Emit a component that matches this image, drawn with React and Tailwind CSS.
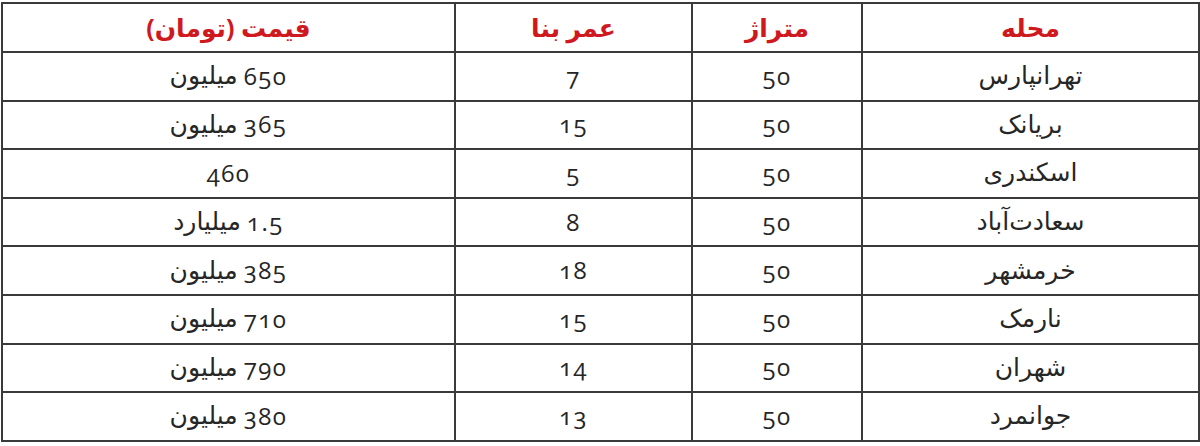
import React from "react";

const rows = [
  ["تهرانپارس", "50", "7", "650 میلیون"],
  ["بریانک", "50", "15", "365 میلیون"],
  ["اسکندری", "50", "5", "460"],
  ["سعادت‌آباد", "50", "8", "1.5 میلیارد"],
  ["خرمشهر", "50", "18", "385 میلیون"],
  ["نارمک", "50", "15", "710 میلیون"],
  ["شهران", "50", "14", "790 میلیون"],
  ["جوانمرد", "50", "13", "380 میلیون"],
];

// Arabic script runs get a larger size so they match the digits
const Cell = ({ text }) => {
  const parts = text.split(" ");
  return (
    <span className="inline-flex items-center gap-[6px] leading-none">
      {parts.map((p, i) =>
        /^[0-9.]+$/.test(p) ? (
          <span key={i} dir="ltr" className="text-[24px] tracking-[1.5px] [font-feature-settings:'onum'] pt-[2px]">
            {p}
          </span>
        ) : (
          <span key={i} className="text-[25px]">{p}</span>
        )
      )}
    </span>
  );
};

const App = () => {
  return (
    <div className="w-[1200px] h-[446px] bg-white pt-[2px] pl-[1px] font-['Open_Sans','DejaVu_Sans',sans-serif]">
      <table dir="rtl" className="w-[1197px] border-collapse border-2 border-[#3a3a3a] table-fixed">
        <colgroup>
          <col className="w-[337px]" />
          <col className="w-[170px]" />
          <col className="w-[237px]" />
          <col className="w-[453px]" />
        </colgroup>
        <thead>
          <tr className="h-[49px]">
            {["محله", "متراژ", "عمر بنا", "قیمت (تومان)"].map((h) => (
              <th
                key={h}
                className="border-2 border-[#3a3a3a] text-center text-[25px] leading-none font-bold text-[#d0181f] p-0"
              >
                {h}
              </th>
            ))}
          </tr>
        </thead>
        <tbody>
          {rows.map((r, i) => (
            <tr key={i} className="h-[48.6px]">
              {r.map((c, j) => (
                <td
                  key={j}
                  className="border-2 border-[#3a3a3a] text-center text-[#262626] p-0"
                >
                  <Cell text={c} />
                </td>
              ))}
            </tr>
          ))}
        </tbody>
      </table>
    </div>
  );
};

export default App;
